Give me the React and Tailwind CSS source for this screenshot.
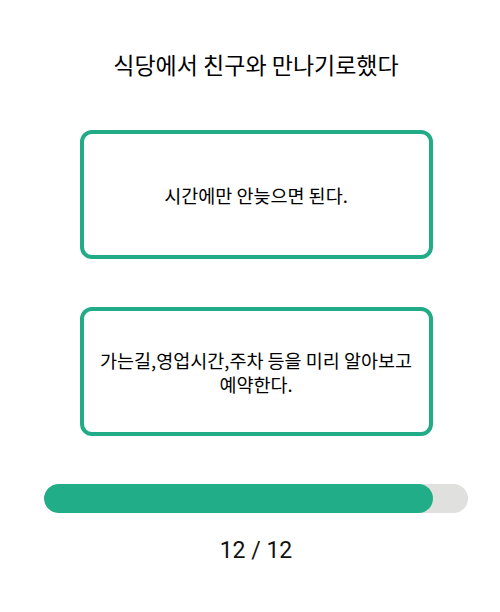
import React from "react";

const cards = [
  "시간에만 안늦으면 된다.",
  "가는길,영업시간,주차 등을 미리 알아보고 예약한다.",
];

export default function App() {
  return (
    <div
      className="w-[500px] h-[612px] bg-white flex flex-col items-center pl-[12px]"
      style={{ fontFamily: '"Noto Sans CJK KR", "Noto Sans", sans-serif' }}
    >
      {/* Question */}
      <h1 className="mt-[46px] text-[23px] leading-[36px] text-black font-normal">
        식당에서 친구와 만나기로했다
      </h1>

      {/* Answer cards */}
      <div className="mt-[48px] flex flex-col gap-[48px]">
        {cards.map((text) => (
          <button
            key={text}
            className="w-[353px] h-[129px] rounded-[12px] border-4 border-[#22ab87] bg-white flex items-center justify-center px-3 text-[18.5px] leading-[24px] text-black text-center"
          >
            {text}
          </button>
        ))}
      </div>

      {/* Progress */}
      <div className="mt-[48px] w-[424px] h-[29px] rounded-full bg-[#e0e0de] overflow-hidden">
        <div className="h-full w-[389px] rounded-full bg-[#21ad88]" />
      </div>
      <div
        className="mt-[24px] text-[23px] leading-[28px] text-[#111]"
        style={{ fontFamily: "Roboto, sans-serif" }}
      >
        12 / 12
      </div>
    </div>
  );
}
